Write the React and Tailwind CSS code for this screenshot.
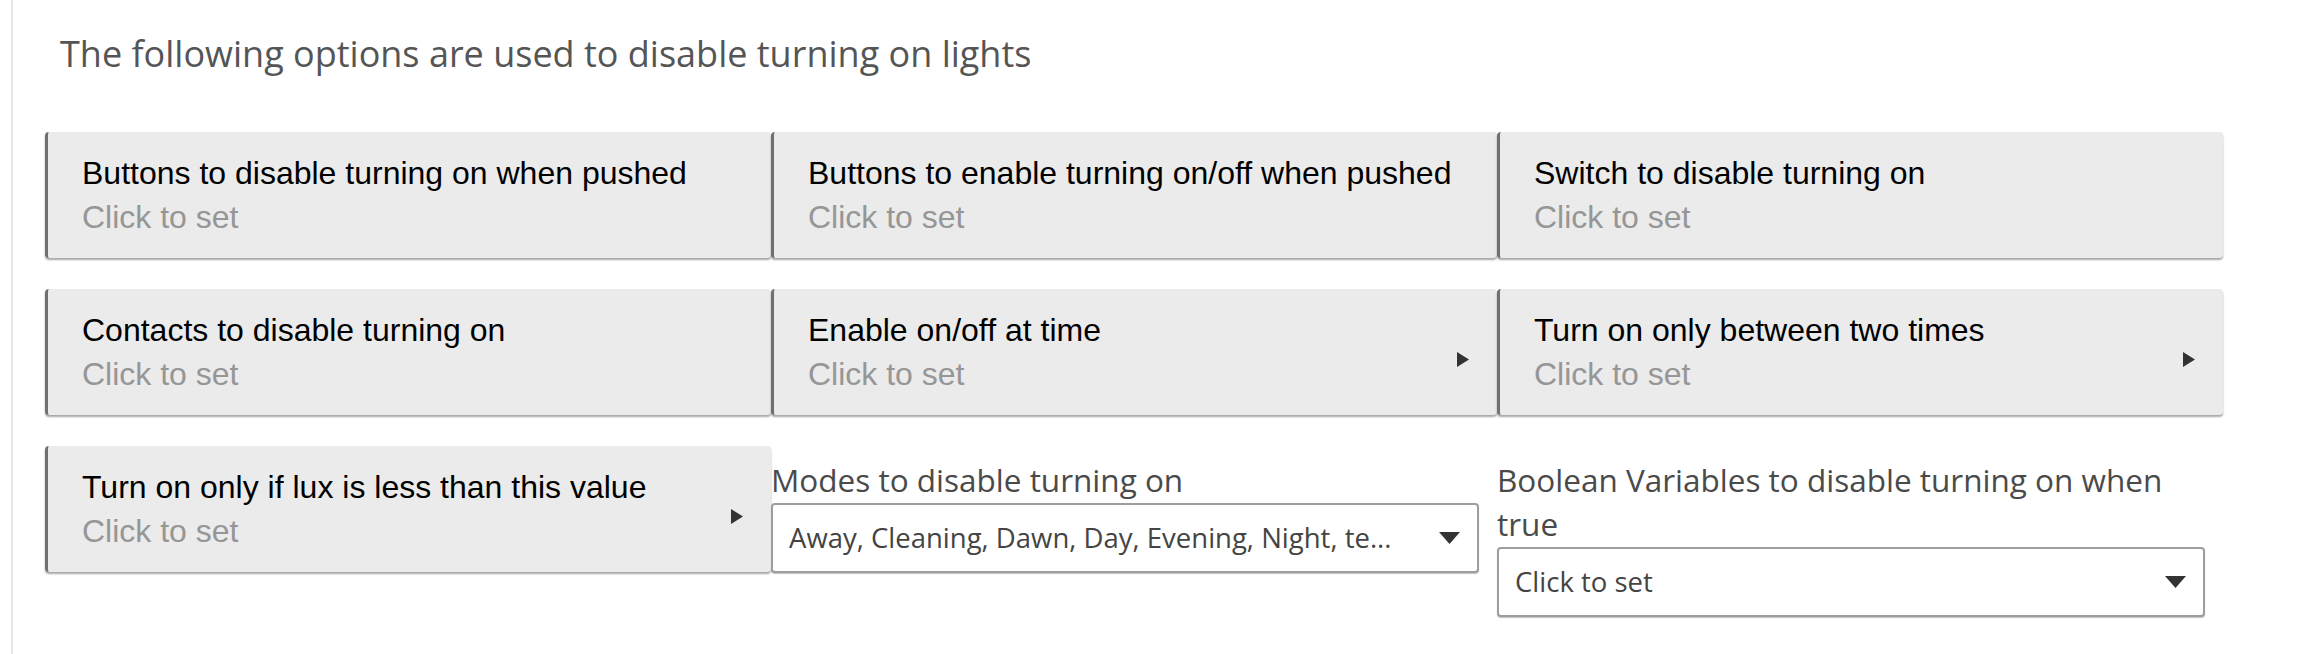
import React from "react";

const ROWS = [
  [
    { title: "Buttons to disable turning on when pushed" },
    { title: "Buttons to enable turning on/off when pushed" },
    { title: "Switch to disable turning on" },
  ],
  [
    { title: "Contacts to disable turning on" },
    { title: "Enable on/off at time", arrow: true },
    { title: "Turn on only between two times", arrow: true },
  ],
];

function Arrow() {
  return (
    <svg width="12" height="15" viewBox="0 0 12 15" className="mt-[14px] shrink-0">
      <path d="M0 0L12 7.5L0 15Z" fill="#333" />
    </svg>
  );
}

function Caret() {
  return (
    <svg width="21" height="12" viewBox="0 0 21 12" className="shrink-0">
      <path d="M0 0H21L10.5 12Z" fill="#333" />
    </svg>
  );
}

function SettingCard({ title, arrow }) {
  return (
    <div className="flex items-center rounded-[4px] border-l-[3px] border-[#707070] bg-[#ebebeb] py-[19px] pl-[34px] pr-[28px] font-['Liberation_Sans',Arial,sans-serif] text-[32px] leading-[44px] shadow-[0_2px_2px_rgba(0,0,0,0.35)]">
      <div className="flex-1">
        <div className="text-black">{title}</div>
        <div className="text-[#969696]">Click to set</div>
      </div>
      {arrow && <Arrow />}
    </div>
  );
}

function SelectField({ label, value }) {
  return (
    <div className="pt-[12px] pr-[18px]">
      <div className="text-[31.5px] leading-[44px] text-[#4a4a4a]">{label}</div>
      <div className="mt-[1px] flex h-[70px] items-center justify-between rounded-[4px] border-2 border-[#9e9e9e] bg-white pl-[16px] pr-[17px] shadow-[0_1px_1px_rgba(0,0,0,0.25)]">
        <span className="truncate text-[27.5px] text-[#444]">{value}</span>
        <Caret />
      </div>
    </div>
  );
}

export default function App() {
  return (
    <div className="h-[654px] overflow-hidden bg-white font-['Open_Sans',sans-serif]">
      <div className="ml-[11px] h-full border-l-2 border-[#e6e6e6] pt-[30px]">
        <h2 className="pl-[47px] text-[36px] leading-[48px] text-[#555]">
          The following options are used to disable turning on lights
        </h2>
        <div className="mt-[54px] ml-[32px] grid w-[2178px] grid-cols-3 items-start gap-y-[31px]">
          {ROWS.flat().map((c) => (
            <SettingCard key={c.title} title={c.title} arrow={c.arrow} />
          ))}
          <SettingCard title="Turn on only if lux is less than this value" arrow />
          <SelectField
            label="Modes to disable turning on"
            value="Away, Cleaning, Dawn, Day, Evening, Night, te..."
          />
          <SelectField
            label="Boolean Variables to disable turning on when true"
            value="Click to set"
          />
        </div>
      </div>
    </div>
  );
}
